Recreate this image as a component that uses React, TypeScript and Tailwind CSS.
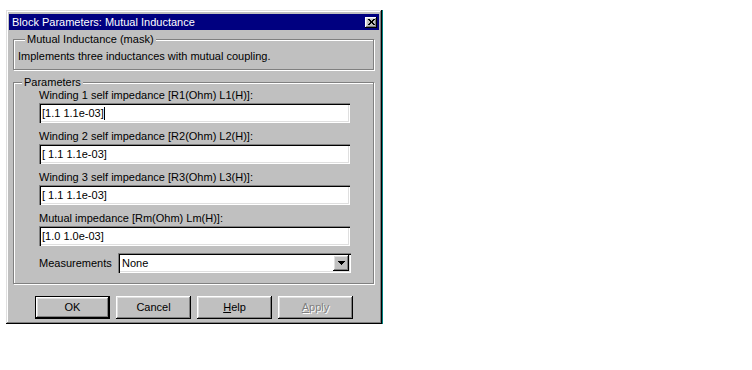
import React from 'react';

const raised =
  'shadow-[inset_-1px_-1px_#000,inset_1px_1px_#fff,inset_-2px_-2px_#808080,inset_2px_2px_#dfdfdf]';
const sunken =
  'shadow-[inset_1px_1px_#808080,inset_2px_2px_#000,inset_-1px_-1px_#fff,inset_-2px_-2px_#dfdfdf]';
const etched = 'border border-[#808080] shadow-[inset_1px_1px_#fff,1px_1px_#fff]';

function Field({ label, value, caret }: { label: string; value: string; caret?: boolean }) {
  return (
    <div className="flex flex-col">
      <div className="h-[15px] leading-[15px]">{label}</div>
      <div className={`w-[311px] h-[20px] bg-white ${sunken} flex items-center pl-[3px]`}>
        <span className="leading-[13px]">{value}</span>
        {caret && <span className="w-[1px] h-[13px] bg-black" />}
      </div>
    </div>
  );
}

function Btn({ children, def, disabled }: { children: React.ReactNode; def?: boolean; disabled?: boolean }) {
  return (
    <button
      className={`w-[75px] h-[23px] bg-[#c0c0c0] flex items-center justify-center ${
        def ? `border border-black ${raised}` : raised
      } ${disabled ? 'text-[#808080] [text-shadow:1px_1px_0_#fff]' : 'text-black'}`}
    >
      {children}
    </button>
  );
}

export default function App() {
  return (
    <div className="w-[752px] h-[370px] bg-white font-['Liberation_Sans',Arial,sans-serif] text-[11px] text-black overflow-hidden">
      <div className="ml-[6px] mt-[10px] w-[376px] h-[314px] bg-[#c0c0c0] pt-[4px] px-[3px] flex flex-col shadow-[inset_-1px_-1px_#000,inset_1px_1px_#dfdfdf,inset_-2px_-2px_#808080,inset_2px_2px_#fff,1px_0_0_#008080]">
        {/* title bar */}
        <div className="h-[16px] bg-[#000080] flex items-center justify-between pl-[3px] pr-[2px] text-white">
          <span className="leading-[14px]">Block Parameters: Mutual Inductance</span>
          <div className={`w-[12px] h-[11px] bg-[#c0c0c0] ${raised} flex items-center justify-center`}>
            <svg width="7" height="6" viewBox="0 0 7 6" shapeRendering="crispEdges">
              <path d="M0 0h2v1h-2zM5 0h2v1h-2zM1 1h2v1h-2zM4 1h2v1h-2zM2 2h3v1h-3zM2 3h3v1h-3zM1 4h2v1h-2zM4 4h2v1h-2zM0 5h2v1h-2zM5 5h2v1h-2z" fill="#000" />
            </svg>
          </div>
        </div>

        <div className="px-[4px] pr-[5px]">
          <fieldset className={`mt-[3px] ${etched} px-[4px] pt-[5px] pb-[6px]`}>
            <legend className="ml-[7px] px-[2px] leading-[12px] bg-[#c0c0c0]">Mutual Inductance (mask)</legend>
            <div className="leading-[13px]">Implements three inductances with mutual coupling.</div>
          </fieldset>

          <fieldset className={`mt-[6px] ${etched} pb-[10px]`}>
            <legend className="ml-[8px] px-[2px] leading-[12px] bg-[#c0c0c0]">Parameters</legend>
            <div className="pl-[25px] flex flex-col gap-[6px]">
              <Field label="Winding 1 self impedance [R1(Ohm) L1(H)]:" value="[1.1 1.1e-03]" caret />
              <Field label="Winding 2 self impedance [R2(Ohm) L2(H)]:" value="[ 1.1 1.1e-03]" />
              <Field label="Winding 3 self impedance [R3(Ohm) L3(H)]:" value="[ 1.1 1.1e-03]" />
              <Field label="Mutual impedance [Rm(Ohm) Lm(H)]:" value="[1.0 1.0e-03]" />
              <div className="flex items-center mt-[1px]">
                <span className="w-[79px]">Measurements</span>
                <div className={`w-[233px] h-[20px] bg-white ${sunken} flex items-center justify-between pl-[4px] pr-[2px]`}>
                  <span>None</span>
                  <div className={`w-[16px] h-[16px] bg-[#c0c0c0] ${raised} flex items-center justify-center`}>
                    <svg width="7" height="4" viewBox="0 0 7 4" shapeRendering="crispEdges">
                      <path d="M0 0h7v1h-7zM1 1h5v1h-5zM2 2h3v1h-3zM3 3h1v1h-1z" fill="#000" />
                    </svg>
                  </div>
                </div>
              </div>
            </div>
          </fieldset>
        </div>

        <div className="mt-[12px] pl-[26px] flex gap-[6px]">
          <Btn def>OK</Btn>
          <Btn>Cancel</Btn>
          <Btn>
            <span>
              <span className="underline">H</span>elp
            </span>
          </Btn>
          <Btn disabled>
            <span>
              <span className="underline">A</span>pply
            </span>
          </Btn>
        </div>
      </div>
    </div>
  );
}
